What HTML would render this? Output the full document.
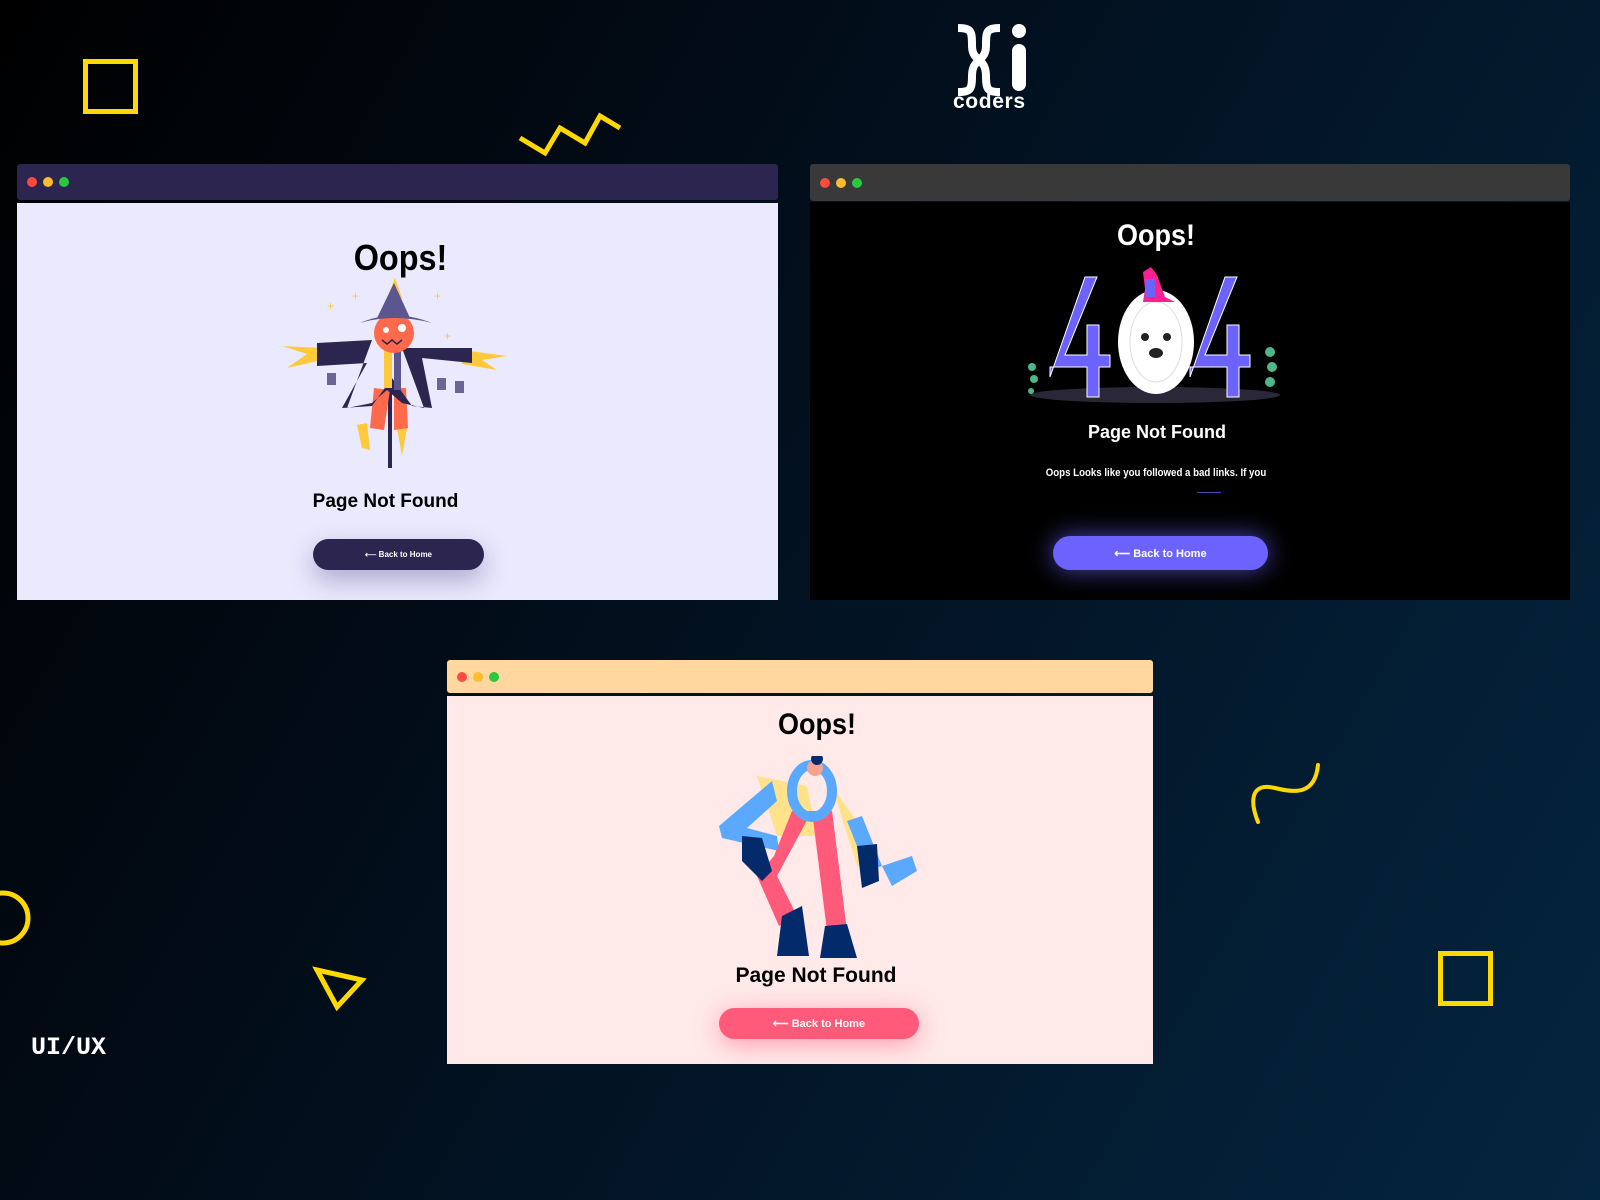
<!DOCTYPE html>
<html><head><meta charset="utf-8"><style>
*{margin:0;padding:0;box-sizing:border-box}
body{width:1600px;height:1200px;overflow:hidden;position:relative;font-family:"Liberation Sans",sans-serif;
background:linear-gradient(120deg,#000000 0%,#020c18 35%,#031a2e 70%,#042540 100%);}
.abs{position:absolute}
.win{position:absolute}
.tb{position:absolute;left:0;right:0;top:0;border-radius:3px}
.dots{position:absolute;left:10px;top:50%;transform:translateY(-50%);display:flex;gap:6px}
.dots i{width:10px;height:10px;border-radius:50%;display:block}
.content{position:absolute;left:0;right:0;bottom:0;overflow:hidden}
.t{position:absolute;left:0;right:0;text-align:center;font-weight:bold;transform-origin:center}
.btn{position:absolute;border-radius:20px;color:#fff;font-weight:bold;display:flex;align-items:center;justify-content:center;gap:6px;font-size:11px}
</style></head><body>

<div class="abs" style="left:83px;top:59px;width:55px;height:55px;border:5px solid #ffd800"></div>
<svg class="abs" style="left:515px;top:108px" width="110" height="50"><polyline points="5,30 30,45 45,20 70,35 85,8 105,20" fill="none" stroke="#ffd800" stroke-width="5"/></svg>
<svg class="abs" style="left:0;top:888px" width="40" height="60"><circle cx="3" cy="30" r="25" fill="none" stroke="#ffd800" stroke-width="5"/></svg>
<svg class="abs" style="left:312px;top:965px" width="60" height="50"><polygon points="5,5 50,15 25,42" fill="none" stroke="#ffd800" stroke-width="5"/></svg>
<div class="abs" style="left:1438px;top:951px;width:55px;height:55px;border:5px solid #ffd800"></div>
<svg class="abs" style="left:1245px;top:760px" width="80" height="70"><path d="M13,62 C5,42 5,22 30,28 C50,33 70,35 73,5" fill="none" stroke="#ffd800" stroke-width="4" stroke-linecap="round"/></svg>
<div class="abs" style="left:31px;top:1033px;color:#fff;font:bold 25px 'Liberation Mono',monospace">UI/UX</div>

<svg class="abs" style="left:950px;top:20px" width="95" height="95">
<path d="M8,8 C22,8 22,12 22,26 C22,36 28,40 34,40 C28,40 22,44 22,56 C22,70 20,72 8,72" fill="none" stroke="#fff" stroke-width="8"/>
<path d="M50,8 C36,8 36,12 36,26 C36,36 30,40 26,40 C30,40 36,44 36,56 C36,70 38,72 50,72" fill="none" stroke="#fff" stroke-width="8"/>
<circle cx="69" cy="11" r="7" fill="#fff"/>
<rect x="62" y="24" width="14" height="47" rx="7" fill="#fff"/>
<text x="3" y="88" fill="#fff" font-family="Liberation Sans,sans-serif" font-weight="bold" font-size="21" textLength="72">coders</text>
</svg>

<!-- window 1 -->
<div class="win" style="left:17px;top:164px;width:761px;height:436px">
 <div class="tb" style="height:36px;background:#2c2550"><div class="dots"><i style="background:#ff4a3d"></i><i style="background:#febc2e"></i><i style="background:#28c840"></i></div></div>
 <div class="content" style="top:39px;background:#eae9fd">
  <div class="t" style="top:34px;font-size:36px;color:#000;transform:scaleX(.9);right:-6px">Oops!</div>
  <svg class="abs" style="left:265px;top:75px" width="230" height="195">
   <g fill="#ffc93c"><path d="M0,68 L40,70 L40,82 L5,90 L25,76z"/><path d="M225,78 L180,72 L180,86 L215,92 L200,82z"/><path d="M113,0 L105,20 L120,20z"/><path d="M75,147 L85,145 L88,172 L80,170z"/><path d="M115,150 L125,150 L120,178z"/></g>
   <rect x="106" y="100" width="4" height="90" fill="#2c2550"/>
   <path d="M92,110 L88,150 L102,152 L108,112z M112,110 L112,152 L126,150 L124,110z" fill="#ff6a4d"/>
   <path d="M35,65 L90,62 L65,130 L90,125 L105,112 L120,125 L142,130 L120,70 L190,70 L190,85 L140,80 L150,130 L130,128 L110,100 L90,128 L60,130 L85,85 L35,88z" fill="#2c2550"/>
   <rect x="102" y="72" width="8" height="38" fill="#ffc93c"/>
   <rect x="112" y="70" width="7" height="42" fill="#5b5590"/>
   <circle cx="112" cy="55" r="20" fill="#ff6a4d"/>
   <path d="M78,45 Q112,30 150,45 Q112,35 78,45z M95,40 L112,5 L128,40z" fill="#5b5590"/>
   <circle cx="104" cy="52" r="3" fill="#fff"/><circle cx="120" cy="50" r="4" fill="#fff"/>
   <path d="M100,62 L105,66 L110,62 L115,66 L120,62" stroke="#2c2550" fill="none" stroke-width="1.5"/>
   <rect x="45" y="95" width="9" height="12" fill="#6a6595"/><rect x="155" y="100" width="9" height="12" fill="#6a6595"/><rect x="173" y="103" width="9" height="12" fill="#6a6595"/>
   <g fill="#ffc93c" font-size="12"><text x="45" y="32">+</text><text x="70" y="22">+</text><text x="152" y="22">+</text><text x="162" y="62">+</text></g>
  </svg>
  <div class="t" style="top:288px;font-size:19px;color:#000;right:24px">Page Not Found</div>
  <div class="btn" style="left:296px;top:336px;width:171px;height:31px;background:#2c2550;box-shadow:0 10px 25px rgba(60,50,120,.35);font-size:8px">⟵ Back to Home</div>
 </div>
</div>

<!-- window 2 -->
<div class="win" style="left:810px;top:164px;width:760px;height:436px">
 <div class="tb" style="height:37px;background:#393939"><div class="dots"><i style="background:#ff4a3d"></i><i style="background:#febc2e"></i><i style="background:#28c840"></i></div></div>
 <div class="content" style="top:38px;background:#000">
  <div class="t" style="top:17px;font-size:30px;color:#fff;transform:scaleX(.9);right:68px">Oops!</div>
  <svg class="abs" style="left:215px;top:65px" width="260" height="145">
   <ellipse cx="130" cy="128" rx="125" ry="8" fill="#2a2838"/>
   <path d="M25,110 L60,10 L72,10 L40,88 L62,88 L62,58 L74,58 L74,88 L85,88 L85,100 L74,100 L74,130 L62,130 L62,100 L25,100z" fill="#6c63ff" stroke="#fff" stroke-width="1"/>
   <path d="M165,110 L200,10 L212,10 L180,88 L202,88 L202,58 L214,58 L214,88 L225,88 L225,100 L214,100 L214,130 L202,130 L202,100 L165,100z" fill="#6c63ff" stroke="#fff" stroke-width="1"/>
   <ellipse cx="131" cy="75" rx="38" ry="52" fill="#fff"/>
   <ellipse cx="131" cy="75" rx="26" ry="40" fill="none" stroke="#ddd"/>
   <circle cx="120" cy="70" r="4" fill="#222"/><circle cx="142" cy="70" r="4" fill="#222"/><ellipse cx="131" cy="86" rx="7" ry="5" fill="#222"/>
   <path d="M120,22 L118,5 L126,0 L132,8 L140,30 L150,35 L118,35z" fill="#ff1f8f"/><rect x="120" y="12" width="10" height="18" fill="#6c63ff"/>
   <g fill="#4fb58a"><circle cx="7" cy="100" r="4"/><circle cx="9" cy="112" r="4"/><circle cx="6" cy="124" r="3"/><circle cx="245" cy="85" r="5"/><circle cx="247" cy="100" r="5"/><circle cx="245" cy="115" r="5"/></g>
  </svg>
  <div class="t" style="top:220px;font-size:18px;color:#fff;right:66px">Page Not Found</div>
  <div class="t" style="top:265px;font-size:11px;color:#fff;transform:scaleX(.88);right:68px">Oops Looks like you followed a bad links. If you</div>
  <div class="abs" style="left:387px;top:290px;width:24px;height:1px;background:#4b47b0"></div>
  <div class="btn" style="left:243px;top:334px;width:215px;height:34px;background:#6c63ff;box-shadow:0 0 25px rgba(108,99,255,.7)">⟵ Back to Home</div>
 </div>
</div>

<!-- window 3 -->
<div class="win" style="left:447px;top:660px;width:706px;height:404px">
 <div class="tb" style="height:33px;background:#ffd79f"><div class="dots"><i style="background:#ff4a3d"></i><i style="background:#febc2e"></i><i style="background:#28c840"></i></div></div>
 <div class="content" style="top:36px;background:#ffeae9">
  <div class="t" style="top:12px;font-size:30px;color:#000;transform:scaleX(.9);left:34px">Oops!</div>
  <svg class="abs" style="left:270px;top:60px" width="215" height="205">
   <path d="M40,20 L90,30 L100,80 L60,80z M115,30 L150,80 L165,110 L140,110z" fill="#ffe28a"/>
   <path d="M2,70 L55,25 L60,45 L30,72 L60,80 L62,95 L5,82z" fill="#5aa9ff"/>
   <path d="M145,60 L165,110 L195,100 L200,115 L175,130 L165,110 L150,115 L130,65z" fill="#5aa9ff"/>
   <path d="M57,100 L75,55 L95,55 L60,120 L80,160 L62,170 L40,120z M95,55 L115,55 L130,175 L110,175z" fill="#ff5a7a"/>
   <path d="M65,160 L85,150 L92,200 L60,200z M108,170 L130,168 L140,202 L103,202z" fill="#032b6b"/>
   <path d="M25,80 L45,82 L55,115 L45,125 L25,105z M140,90 L160,88 L162,125 L145,132z" fill="#032b6b"/>
   <ellipse cx="95" cy="35" rx="20" ry="26" fill="none" stroke="#5aa9ff" stroke-width="10"/>
   <circle cx="98" cy="12" r="8" fill="#f5a28f"/><circle cx="100" cy="3" r="6" fill="#032b6b"/>
  </svg>
  <div class="t" style="top:268px;font-size:21px;color:#000;left:32px">Page Not Found</div>
  <div class="btn" style="left:272px;top:312px;width:200px;height:31px;background:#ff5a7a;box-shadow:0 5px 25px rgba(255,90,122,.55)">⟵ Back to Home</div>
 </div>
</div>
</body></html>
